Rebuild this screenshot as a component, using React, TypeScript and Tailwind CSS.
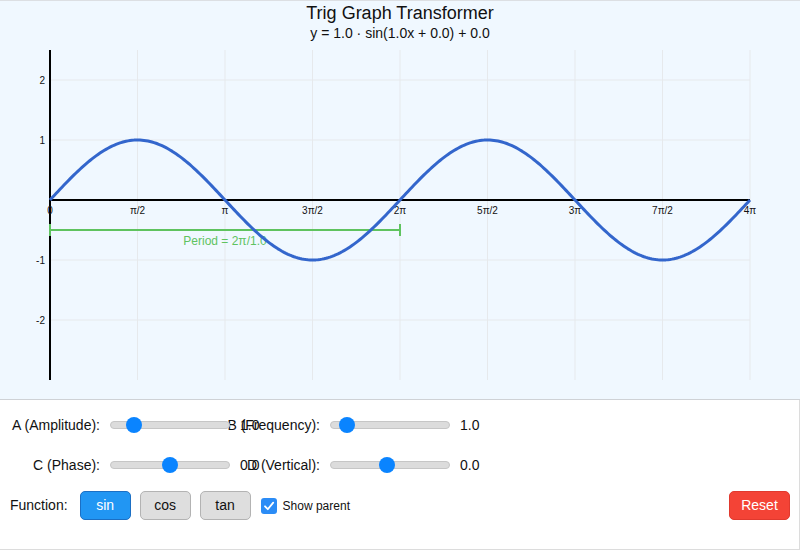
import React from "react"

const X0 = 50
const X1 = 750
const Y0 = 200
const UNIT = 60
const STEP = (X1 - X0) / 8

const xTicks = ["0", "π/2", "π", "3π/2", "2π", "5π/2", "3π", "7π/2", "4π"]
const yTicks = [2, 1, -1, -2]

function sinePath() {
  const pts: string[] = []
  for (let x = X0; x <= X1; x += 2) {
    const t = ((x - X0) / (X1 - X0)) * 4 * Math.PI
    pts.push(`${x},${(Y0 - UNIT * Math.sin(t)).toFixed(2)}`)
  }
  return "M" + pts.join(" L")
}

const Graph: React.FC = () => {
  return (
    <svg width="800" height="358" viewBox="0 41 800 358" className="block">
      {/* grid */}
      {xTicks.map((_, i) =>
        i === 0 ? null : (
          <line key={"gx" + i} x1={X0 + STEP * i} y1={50} x2={X0 + STEP * i} y2={380} stroke="#e6e9ec" strokeWidth="1" />
        )
      )}
      {yTicks.map((v) => (
        <line key={"gy" + v} x1={X0} y1={Y0 - v * UNIT} x2={X1} y2={Y0 - v * UNIT} stroke="#e6e9ec" strokeWidth="1" />
      ))}

      {/* axes */}
      <line x1={X0} y1={Y0} x2={X1} y2={Y0} stroke="#000" strokeWidth="2" />
      <line x1={X0} y1={50} x2={X0} y2={380} stroke="#000" strokeWidth="2" />

      {/* labels */}
      {xTicks.map((t, i) => (
        <text key={"lx" + i} x={X0 + STEP * i} y={213.5} textAnchor="middle" fontSize="10" fill="#111" fontFamily="Liberation Sans, Arial, sans-serif">
          {t}
        </text>
      ))}
      {yTicks.map((v) => (
        <text key={"ly" + v} x={45} y={Y0 - v * UNIT + 3.6} textAnchor="end" fontSize="10" fill="#111" fontFamily="Liberation Sans, Arial, sans-serif">
          {v}
        </text>
      ))}

      {/* period marker */}
      <line x1={X0} y1={230} x2={X0 + STEP * 4} y2={230} stroke="#5fc35f" strokeWidth="2" />
      <line x1={X0} y1={224} x2={X0} y2={236} stroke="#5fc35f" strokeWidth="2" />
      <line x1={X0 + STEP * 4} y1={224} x2={X0 + STEP * 4} y2={236} stroke="#5fc35f" strokeWidth="2" />
      <text x={225} y={245} textAnchor="middle" fontSize="12" fill="#5fc35f" fontFamily="Liberation Sans, Arial, sans-serif">
        Period = 2π/1.0
      </text>

      {/* curve */}
      <path d={sinePath()} fill="none" stroke="#3366cc" strokeWidth="3" strokeLinejoin="round" />
    </svg>
  )
}

const Slider: React.FC<{ offset: number }> = ({ offset }) => (
  <div className="relative w-[120px] h-[8px] shrink-0 rounded-full bg-[#dcdcdc] border border-[#c6c6c6]">
    <span
      className="absolute top-1/2 -translate-y-1/2 w-4 h-4 rounded-full bg-[#0a84ff]"
      style={{ left: offset - 1 }}
    />
  </div>
)

const Control: React.FC<{ label: string; value: string; offset: number }> = ({ label, value, offset }) => (
  <div className="w-[220px] shrink-0 flex items-center gap-[10px]">
    <span className="w-[90px] shrink-0 flex justify-end whitespace-nowrap">{label}</span>
    <Slider offset={offset} />
    <span className="w-0 shrink-0 whitespace-nowrap">{value}</span>
  </div>
)

export default function App() {
  return (
    <div className="w-[800px] h-[552px] bg-white text-[#111] font-['Liberation_Sans',Arial,sans-serif]">
      {/* Graph area */}
      <div className="h-[400px] bg-[#f0f8ff] border-t border-b border-t-[#dcdfe3] border-b-[#cfd2d6]">
        <div className="h-[40px] pt-[2px] text-center">
          <div className="text-[18px] leading-[21px]">Trig Graph Transformer</div>
          <div className="mt-[1px] text-[14px] leading-[16px]">y = 1.0 · sin(1.0x + 0.0) + 0.0</div>
        </div>
        <Graph />
      </div>

      {/* Controls */}
      <div className="h-[150px] pl-[10px] pr-[9px] pt-[15px] border-r border-b border-[#dcdcdc] text-[14px]">
        <div className="h-[20px] flex items-center">
          <Control label="A (Amplitude):" value="1.0" offset={16} />
          <Control label="B (Frequency):" value="1.0" offset={9} />
        </div>
        <div className="h-[20px] mt-[20px] flex items-center">
          <Control label="C (Phase):" value="0.0" offset={52} />
          <Control label="D (Vertical):" value="0.0" offset={49} />
        </div>
        <div className="h-[29px] mt-[16px] flex items-center">
          <span>Function:</span>
          <button className="ml-[12px] w-[51px] h-[29px] rounded-[5px] bg-[#2196f3] border border-[#1b6fc4] text-white">sin</button>
          <button className="ml-[9px] w-[51px] h-[29px] rounded-[5px] bg-[#dedede] border border-[#b3b3b3]">cos</button>
          <button className="ml-[9px] w-[51px] h-[29px] rounded-[5px] bg-[#dedede] border border-[#b3b3b3]">tan</button>
          <span className="ml-[10px] w-4 h-4 rounded-[3px] bg-[#2b8cf6] flex items-center justify-center">
            <svg width="12" height="12" viewBox="0 0 12 12" fill="none">
              <path d="M2 6.3 L4.8 9.2 L10.2 2.6" stroke="#fff" strokeWidth="1.8" strokeLinecap="round" strokeLinejoin="round" />
            </svg>
          </span>
          <span className="ml-[6px] text-[12px]">Show parent</span>
          <button className="ml-auto w-[61px] h-[29px] rounded-[5px] bg-[#f44336] border border-[#e0392e] text-white">Reset</button>
        </div>
      </div>
    </div>
  )
}
